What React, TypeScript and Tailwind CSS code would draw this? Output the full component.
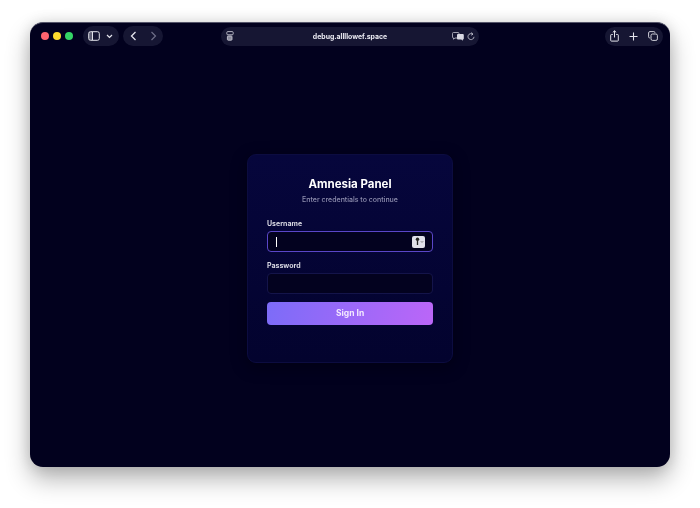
export default function App() {
  const font = { fontFamily: 'Inter, "Liberation Sans", sans-serif' };
  return (
    <div style={font} className="antialiased w-[700px] h-[508px] bg-white overflow-hidden pt-[22px] px-[30px]">
      <div className="relative h-[445px] rounded-[13px] bg-[#02011e] border-t border-[#55556a] shadow-[0_12px_24px_rgba(0,0,0,0.3),0_0_14px_rgba(0,0,0,0.12)] flex flex-col overflow-hidden">
        <div className="h-[24px] mt-[1px] shrink-0 flex items-center pl-[11px] pr-[7px] text-[#e4e4ec]">
          <div className="flex gap-[4px] w-[42px]">
            <span className="w-[8px] h-[8px] rounded-full bg-[#ff6470]" />
            <span className="w-[8px] h-[8px] rounded-full bg-[#fedb2e]" />
            <span className="w-[8px] h-[8px] rounded-full bg-[#34d566]" />
          </div>
          <div className="w-[36px] h-[20px] rounded-full bg-[#161633] flex items-center pl-[5px] gap-[6px]">
            <svg width="12" height="10" viewBox="0 0 12 10" fill="none" stroke="currentColor" strokeWidth="1">
              <rect x="0.7" y="0.7" width="10.6" height="8.6" rx="1.8" />
              <path d="M4.5 1v8" />
              <path d="M1 1h3.5v8H1z" fill="currentColor" fillOpacity="0.35" stroke="none" />
            </svg>
            <svg width="7" height="5" viewBox="0 0 7 5" fill="none" stroke="currentColor" strokeWidth="1.2">
              <path d="M1 1l2.5 2.5L6 1" />
            </svg>
          </div>
          <div className="ml-[4px] w-[40px] h-[20px] rounded-full bg-[#161633] flex items-center pl-[7px] gap-[13px]">
            <svg width="7" height="10" viewBox="0 0 7 10" fill="none" stroke="currentColor" strokeWidth="1.3">
              <path d="M5.5 1L1.5 5l4 4" />
            </svg>
            <svg width="7" height="10" viewBox="0 0 7 10" fill="none" stroke="#6f6f88" strokeWidth="1.2">
              <path d="M1.5 1l4 4-4 4" />
            </svg>
          </div>
          <div className="ml-[58px] w-[258px] h-[19px] rounded-full bg-[#161633] flex items-center justify-between pl-[5px] pr-[4px] relative">
            <svg width="8" height="10" viewBox="0 0 8 10" fill="none" stroke="#c4c4d0" strokeWidth="0.9">
              <rect x="0.8" y="0.6" width="6.4" height="3.2" rx="1" />
              <rect x="1.4" y="5" width="4.6" height="4.2" rx="0.8" fill="#8a8a9c" />
            </svg>
            <span className="will-change-transform text-[6.9px] leading-[19px] font-bold text-[#ececf4] absolute left-0 right-0 top-0 text-center">debug.allllowef.space</span>
            <div className="flex items-center gap-[3px]">
              <svg width="12" height="9" viewBox="0 0 12 9">
                <path d="M1.5 .5h4.5a1 1 0 0 1 1 1v3.5a1 1 0 0 1-1 1H3L1.5 7.2V6a1 1 0 0 1-1-1V1.5a1 1 0 0 1 1-1z" fill="none" stroke="#c4c4d0" strokeWidth="0.8" />
                <path d="M6 2h4.8a1 1 0 0 1 1 1v3.5a1 1 0 0 1-1 1v1.2L9.3 7.5H6a1 1 0 0 1-1-1V3a1 1 0 0 1 1-1z" fill="#d8d8e2" />
              </svg>
              <svg width="8" height="9" viewBox="0 0 8 9" fill="none" stroke="#d0d0dc" strokeWidth="0.8">
                <path d="M5.8 2.2A3 3 0 1 0 7 4.8" />
                <path d="M4.2 0.6l1.8 1.6-1.9 1" />
              </svg>
            </div>
          </div>
          <div className="ml-auto w-[58px] h-[19px] rounded-full bg-[#161633] flex items-center justify-between px-[5px]">
            <svg width="9" height="12" viewBox="0 0 9 12" fill="none" stroke="currentColor" strokeWidth="1">
              <path d="M2.8 4.5H1.4a.7.7 0 0 0-.7.7v5.2a.7.7 0 0 0 .7.7h6.2a.7.7 0 0 0 .7-.7V5.2a.7.7 0 0 0-.7-.7H6.2" />
              <path d="M4.5 7.5V.8M2.8 2.4L4.5.8l1.7 1.6" />
            </svg>
            <svg width="9" height="9" viewBox="0 0 9 9" fill="none" stroke="currentColor" strokeWidth="1.1">
              <path d="M4.5.5v8M.5 4.5h8" />
            </svg>
            <svg width="10" height="10" viewBox="0 0 10 10" fill="none" stroke="currentColor" strokeWidth="0.9">
              <rect x="3" y="3" width="6.4" height="6.4" rx="1.5" />
              <path d="M1.8 7A1.2 1.2 0 0 1 .6 5.8V1.9A1.3 1.3 0 0 1 1.9.6h3.9A1.2 1.2 0 0 1 7 1.8" />
            </svg>
          </div>
        </div>
        <div className="flex-1 flex justify-center pt-[106px]">
          <div className="w-[206px] h-[209px] rounded-[9px] bg-[linear-gradient(180deg,#06063c,#03032e)] border border-[#0c0c40] px-[19px] pt-[21px] shadow-[0_4px_16px_rgba(0,0,0,0.35)]">
            <h1 className="will-change-transform text-[11.5px] leading-[16px] font-bold text-white text-center">Amnesia Panel</h1>
            <p className="will-change-transform mt-[1px] text-[7px] leading-[14px] font-medium text-[#9090b0] text-center">Enter credentials to continue</p>
            <label className="will-change-transform block mt-[12px] text-[7px] leading-[10px] font-bold text-[#d8d8e2]">Username</label>
            <div className="mt-[2px] h-[21px] rounded-[4px] bg-[#03021f] border border-[#5a46c8] flex items-center justify-between pl-[8px] pr-[7px]">
              <span className="w-px h-[10px] bg-white" />
              <span className="w-[13px] h-[12px] rounded-[2px] bg-[#e0e0ea] flex items-center justify-center">
                <svg width="10" height="9" viewBox="0 0 10 9" fill="none">
                  <circle cx="3.5" cy="2.2" r="1.7" fill="#222" />
                  <path d="M3.5 3v5" stroke="#222" strokeWidth="1.3" />
                  <path d="M6.8 4.2l1.2 1.2 1.2-1.2" stroke="#555" strokeWidth="0.7" />
                </svg>
              </span>
            </div>
            <label className="will-change-transform block mt-[9px] text-[7px] leading-[10px] font-bold text-[#d8d8e2]">Password</label>
            <div className="mt-[2px] h-[21px] rounded-[4px] bg-[#03021f] border border-[#14144a]" />
            <button className="mt-[8px] w-full h-[23px] rounded-[4px] bg-[linear-gradient(100deg,#7c6cf8,#bb66f8)] text-[8.5px] font-bold text-[#f3e8ff]"><span className="inline-block will-change-transform">Sign In</span></button>
          </div>
        </div>
      </div>
    </div>
  );
}
